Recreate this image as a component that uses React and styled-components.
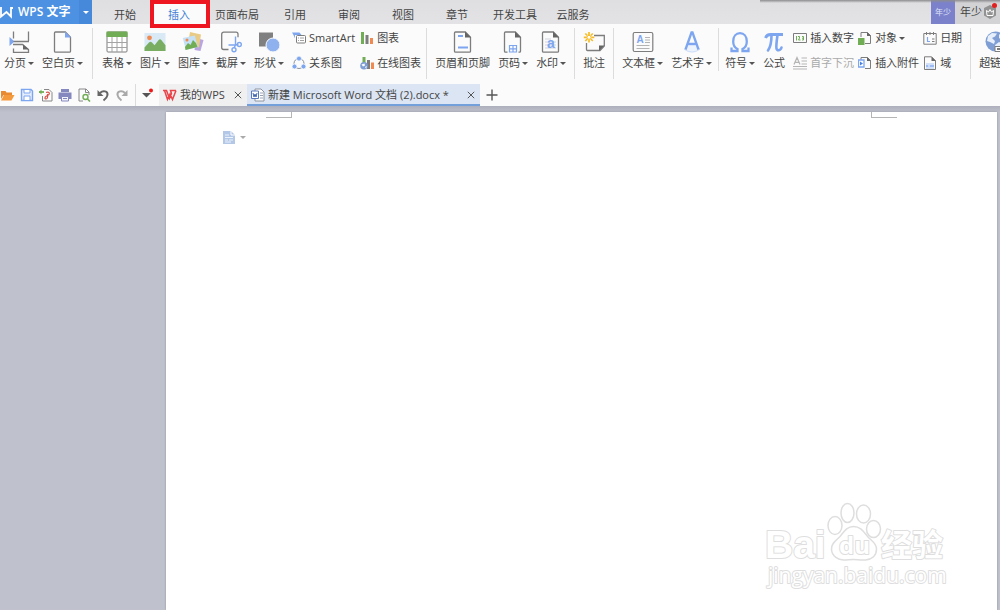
import React from "react";
import styled, { createGlobalStyle } from "styled-components";

const gray = "#7d7d7d";
const blue = "#7ea6f0";
const green = "#70ad55";
const orange = "#f08a50";

const Icon = ({ size = 22, children }) => (
  <svg width={size} height={size} viewBox={`0 0 ${size} ${size}`} fill="none" aria-hidden="true">
    {children}
  </svg>
);

const PageOutline = () => (
  <>
    <path d="M3.5 1h9.8l5.2 5.200v14a1 1 0 0 1-1 1h-14a1 1 0 0 1-1-1V2a1 1 0 0 1 1-1z" stroke={gray} strokeWidth="1.3" />
    <path d="M13 .6l6 6h-6z" fill="#666" />
  </>
);

const BreakIcon = () => (
  <Icon>
    <path d="M1.5 6l5 4.500-5 4.500z" fill={blue} />
    <path d="M5.500.5v7M5.500 10.500H21M20.500 10V.5M5 13.500h9.500l6 5v3h-15v-4" stroke={gray} strokeWidth="1.3" />
    <path d="M15 13.500v5h6z" fill="#666" />
  </Icon>
);

const BlankIcon = () => (
  <Icon>
    <path d="M3.5 1h9.800l5.200 5.200v14a1 1 0 0 1-1 1h-14a1 1 0 0 1-1-1V2a1 1 0 0 1 1-1z" stroke={gray} strokeWidth="1.3" />
    <path d="M13 .5l6 6h-6z" fill={blue} />
  </Icon>
);

const TableIcon = () => (
  <Icon>
    <rect x="1" y="1" width="20" height="20" rx="1" fill="#fff" stroke={gray} />
    <path d="M1 11.5h20M1 16.5h20M6 6v15M11 6v15M16 6v15" stroke="#a3a3a3" />
    <path d="M.5.5h21V6H.5z" fill={green} />
  </Icon>
);

const PictureIcon = () => (
  <Icon>
    <path d="M.5 2h21v18H.5z" fill="#d9e9f6" />
    <circle cx="5.5" cy="6.8" r="2.4" fill={orange} />
    <path d="M.5 20v-3.5L5 11.5c1-1 2-1 3 0l2.5 2.7 4-5c1-1.2 2-1.2 3 0l4 5V20z" fill="#79ae62" />
  </Icon>
);

const GalleryIcon = () => (
  <Icon>
    <path d="M14 7l7.5 2-3 11-6-1z" fill="#b9a6e0" />
    <path d="M8 1l11 2.5-2 13L6 13z" fill="#eacb85" />
    <path d="M.8 7l12-2.5 3 11.5-12 3z" fill="#c4e1f7" />
    <circle cx="5" cy="9" r="1.5" fill={orange} />
    <path d="M3 16l3-4 2.5 2 2.5-5 3 3 1.5 4-12 3z" fill={green} />
  </Icon>
);

const ScreenshotIcon = () => (
  <Icon>
    <path d="M8.5 18.5H3.700a2 2 0 0 1-2-2V3.200a2 2 0 0 1 2-2H16a2 2 0 0 1 2 2v3" stroke={gray} strokeWidth="1.3" />
    <path d="M15.5 5.500v8.500l-1.500 3M8.500 14h7l3-.5" stroke={blue} strokeWidth="1.4" />
    <circle cx="19.3" cy="13.500" r="2" stroke={blue} strokeWidth="1.4" />
    <circle cx="14" cy="18.800" r="2" stroke={blue} strokeWidth="1.4" />
  </Icon>
);

const ShapesIcon = () => (
  <Icon>
    <path d="M1 1.5h14v14H1z" fill="#808080" />
    <circle cx="15" cy="14" r="7" fill="#8fb2ef" stroke="#fbfbfb" />
  </Icon>
);

const HeaderFooterIcon = () => (
  <Icon>
    <PageOutline />
    <path d="M6 5h5M6 16.5h10" stroke={blue} strokeWidth="1.8" />
  </Icon>
);

const PageNumberIcon = () => (
  <Icon>
    <path d="M5.5 21.200h-2a1 1 0 0 1-1-1V2a1 1 0 0 1 1-1h9.800l5.200 5.200v14a1 1 0 0 1-1 1h-1" stroke={gray} strokeWidth="1.3" />
    <path d="M13 .6l6 6h-6z" fill="#666" />
    <path d="M7.5 14.5h7V21h-7zM7.5 17.800h7M11 14.500V21" stroke={blue} strokeWidth="1.2" />
  </Icon>
);

const IconLetter = styled.text`
  font-family: "Liberation Sans", sans-serif;
  font-weight: 700;
  font-size: ${(p) => p.$size}px;
  fill: ${blue};
  text-anchor: middle;
`;

const WatermarkIcon = () => (
  <Icon>
    <PageOutline />
    <path d="M5 8h6M5 11h11M5 14h11M5 17h11" stroke="#cdd3dd" />
    <IconLetter x="11" y="17" $size={14}>a</IconLetter>
  </Icon>
);

const CommentIcon = () => (
  <Icon>
    <path d="M11 4.500h10.300V15L17 19.500H4.500a1 1 0 0 1-1-1V12" stroke={gray} strokeWidth="1.3" />
    <path d="M21.5 14.5H16V20z" fill="#666" />
    <path d="M6 1v3M6 8.500v3M.8 6.300h3M8.300 6.300h3M2.300 2.500l2 2M7.800 8l2 2M9.800 2.500l-2 2M4.300 8l-2 2" stroke="#f7bd28" strokeWidth="1.7" />
    <circle cx="6" cy="6.300" r="2" fill="#fff" stroke="#f7bd28" />
  </Icon>
);

const TextBoxIcon = () => (
  <Icon>
    <rect x="1.2" y="1.500" width="19.600" height="19" rx="1.500" stroke={gray} strokeWidth="1.2" />
    <IconLetter x="8" y="12" $size={10}>A</IconLetter>
    <path d="M13 6.500h5M13 9h5M13 11.500h5M4.500 14.500h13M4.500 17.500h13" stroke="#b4b4b4" />
  </Icon>
);

const WordArtIcon = () => (
  <Icon>
    <ellipse cx="11" cy="18" rx="8" ry="3.500" fill="#edf3fd" />
    <path d="M3 18q8 6 16 0" stroke="#cfdef9" />
    <path d="M4.500 18.500L10.500 1.500h1l6 17M7 13h8" stroke={blue} strokeWidth="2.300" />
  </Icon>
);

const OmegaIcon = () => (
  <Icon>
    <path d="M2.500 16.500v3.500h6v-2C5.500 16.500 4.200 13.500 4.200 10.500c0-5 2.800-8.300 6.800-8.300s6.800 3.300 6.800 8.300c0 3-1.300 6-4.300 7.500v2h6v-3.500" stroke={blue} strokeWidth="2.300" />
  </Icon>
);

const PiIcon = () => (
  <Icon>
    <path d="M2.500 7C3.500 4 5 3.500 7.500 3.500H20" stroke={blue} strokeWidth="2.800" />
    <path d="M8.500 4c0 7-1 12-3.500 15.500M14.500 4c-1 7-1.500 11-1 13.500.5 2.500 4 2.500 5-1" stroke={blue} strokeWidth="2.600" strokeLinecap="round" />
  </Icon>
);

const GlobeIcon = () => (
  <Icon>
    <circle cx="10.5" cy="10.500" r="10" fill="#7f9fd4" />
    <path d="M3 5l4-3 5 .5-2 3-3 1.500 3 3-1 3-4-2-3-1zM14 3l5 4-2 2-3-2zM10 14l4-3 5 2-3 5-5 1z" fill="#e7effa" />
    <path d="M10 15.500h11.500v5H10z" fill="#fff" stroke={gray} />
    <path d="M12 18h3M17 18h3" stroke={gray} strokeWidth="2" />
  </Icon>
);

const SmartArtIcon = () => (
  <Icon size={14}>
    <path d="M0 1.500h7.500l2 2.500H3v3.500L1.500 4z" fill={blue} />
    <rect x="4.500" y="4.500" width="9" height="7.500" rx="1" fill="#fff" stroke={gray} />
    <path d="M6 7h1M8 7h4M6 9.500h1M8 9.500h4" stroke="#a0a0a0" />
  </Icon>
);

const RelationIcon = () => (
  <Icon size={14}>
    <circle cx="7" cy="7.500" r="5" stroke="#8a8f98" />
    <g fill={blue} stroke="#fbfbfb" strokeWidth=".8">
      <circle cx="7" cy="2.600" r="2.500" />
      <circle cx="2.500" cy="10.500" r="2.500" />
      <circle cx="11.500" cy="10.500" r="2.500" />
    </g>
  </Icon>
);

const ChartIcon = () => (
  <Icon size={14}>
    <path d="M1 1h3v12H1z" fill={green} />
    <path d="M5.500 4h3v9h-3z" fill={gray} />
    <path d="M10 7h3v6h-3z" fill={orange} />
  </Icon>
);

const OnlineChartIcon = () => (
  <Icon size={14}>
    <path d="M2.500 1h3v7h-3z" fill={green} />
    <path d="M7 4h3v9H7z" fill={gray} />
    <path d="M11 6.500h3V13h-3z" fill={orange} />
    <circle cx="4" cy="9.700" r="3.800" fill="#7f9fd4" />
    <path d="M1.500 8.500l3-1 .5 2-2 1zM5 11l2-1-1 2.500z" fill="#fff" />
  </Icon>
);

const NumberIcon = () => (
  <Icon size={14}>
    <path d="M.5 2.500h13v9H.5z" stroke={gray} />
    <path d="M3.500 5v4.500M5 5.500h1.500v1.500L5.500 9H7.500M9 5.500h1.500v3.500H9M9 7.200h1.500" stroke={green} />
  </Icon>
);

const DropCapIcon = () => (
  <Icon size={14}>
    <path d="M1 8.500l3-7 3 7M2 6.300h4M8.500 2H14M8.500 5H14M8.500 8H14M0 10.500h14M0 13h14" stroke="#b5b5b5" strokeWidth="1.200" />
  </Icon>
);

const SmallPage = () => (
  <>
    <path d="M3 6V1.500h6.500l3 3v8H7" stroke={gray} />
    <path d="M9 1v4h4z" fill="#666" />
  </>
);

const ObjectIcon = () => (
  <Icon size={14}>
    <SmallPage />
    <path d="M0 7h6.500v7H0z" fill={green} />
  </Icon>
);

const AttachIcon = () => (
  <Icon size={14}>
    <SmallPage />
    <path d="M.5 4H6v7H.5z" fill="#fff" stroke={blue} strokeWidth="1.300" />
    <path d="M2 5.500l3 2-3 2z" fill="#4c82dc" />
  </Icon>
);

const DateIcon = () => (
  <Icon size={14}>
    <path d="M.8 2.500h12.400v10.700H.8z" stroke={gray} />
    <path d="M3.500 1v3M7 1v3M10.500 1v3M9 8h2.500M9 10.500h2.500" stroke={gray} />
    <path d="M4.500 6v4.500H7" stroke={blue} strokeWidth="1.200" />
  </Icon>
);

const FieldIcon = () => (
  <Icon size={14}>
    <path d="M1.500.8h7l4 4v8.700h-11z" stroke={gray} />
    <path d="M8.500.5V5H13z" fill="#666" />
    <path d="M3 8h8M3 12h8" stroke="#a9c4f5" />
    <path d="M3 10h2.500M6.500 10H11" stroke={blue} strokeWidth="1.600" />
  </Icon>
);

const quickActions = [
  {
    label: "打开",
    art: (
      <>
        <path d="M0 3h4.500l1 1.500H11V7H2.500L0 11z" fill="#e88a32" />
        <path d="M3 7h10.500l-3 5.500H0z" fill="#f59a3c" />
      </>
    ),
  },
  {
    label: "保存",
    art: (
      <>
        <path d="M1.500 1.500H11L12.500 3v9.500h-11z" fill="#e4eefd" stroke={blue} strokeWidth="1.400" />
        <path d="M4 1.500h6V5H4zM4 8h6v4.500H4z" fill="#fff" stroke={blue} />
      </>
    ),
  },
  {
    label: "输出为PDF",
    art: (
      <>
        <path d="M5 1.500h5l3 3V13H3.500V8" stroke="#888" />
        <path d="M0 4h5" stroke={green} strokeWidth="1.800" />
        <path d="M2.500 1.500L0 4l2.500 2.500z" fill={green} />
        <path d="M7 4.500c3-1 4 .5 3 2L7.500 8c-2 1-2 3-.5 3s2-2 1.500-5" stroke="#d9534a" strokeWidth="1.200" />
      </>
    ),
  },
  {
    label: "打印",
    art: (
      <>
        <path d="M3 1h8v3H3zM.5 4.500h13V11H.5z" fill="#8587bf" />
        <path d="M3.500 8.500h7V13h-7z" fill="#f3f3fb" stroke="#8587bf" />
        <path d="M5 10.500h4" stroke="#8587bf" />
      </>
    ),
  },
  {
    label: "打印预览",
    art: (
      <>
        <path d="M6 13H2V1h7l3 3v3" stroke="#888" />
        <path d="M8.500 1v3.500H12" stroke="#888" />
        <circle cx="8.500" cy="9" r="2.500" stroke={green} strokeWidth="1.400" />
        <path d="M10.500 11l2.500 2.500" stroke={green} strokeWidth="1.600" />
      </>
    ),
  },
  {
    label: "撤销",
    art: (
      <>
        <path d="M4 5c3-3 8-2 7.500 2-.3 2.500-2 4-4 5.500" stroke="#666" strokeWidth="2" />
        <path d="M1.500 2v6h6z" fill="#666" />
      </>
    ),
  },
  {
    label: "恢复",
    art: (
      <>
        <path d="M10 5C7 2 2 3 2.500 7c.3 2.500 2 4 4 5.500" stroke="#a9a9a9" strokeWidth="2" />
        <path d="M12.500 2v6h-6z" fill="#a9a9a9" />
      </>
    ),
  },
];

const tabs = ["开始", "插入", "页面布局", "引用", "审阅", "视图", "章节", "开发工具", "云服务"];

const Tool = ({ icon, label, menu }) => (
  <ToolButton type="button">
    {icon}
    <ToolLabel>
      {label}
      {menu && <Caret />}
    </ToolLabel>
  </ToolButton>
);

const SmallTool = ({ icon, label, menu, disabled }) => (
  <SmallButton type="button" disabled={disabled}>
    {icon}
    <ToolLabel>
      {label}
      {menu && <Caret />}
    </ToolLabel>
  </SmallButton>
);

const Close = () => (
  <CloseButton type="button" aria-label="关闭">
    <svg width="8" height="8" viewBox="0 0 8 8" aria-hidden="true">
      <path d="M.8.8l6.400 6.400M7.200.8L.8 7.200" stroke="#555" />
    </svg>
  </CloseButton>
);

const Watermark = () => (
  <WatermarkSvg width="184" height="92" viewBox="0 0 184 92" role="img" aria-label="Baidu 经验">
    <WatermarkText x="0" y="58" $size={39} $weight={700}>Bai</WatermarkText>
    <g fill="#fff" stroke="#dedede" strokeWidth="1.500">
      <ellipse cx="70" cy="25.500" rx="7" ry="9" />
      <ellipse cx="82.500" cy="13" rx="6.500" ry="9.500" />
      <ellipse cx="98.500" cy="14" rx="7" ry="9" />
      <ellipse cx="108.500" cy="29" rx="7" ry="8.500" />
      <path d="M88.500 26.500c-7 0-10 6-13.500 10-4 4-9 7-8.500 13 .5 7 7 10.500 12 10.500 4 0 6-.5 10-.5s7 1 12 .5c6-.5 11-4 11-11 0-6-5-8-8.500-12-4-4.500-7-10.500-14.500-10.500z" />
    </g>
    <WatermarkText x="74" y="54" $size={24} $weight={700}>du</WatermarkText>
    <WatermarkText x="116" y="56" $size={31} $weight={700}>经验</WatermarkText>
    <WatermarkText x="3" y="83" $size={21} $weight={400}>jingyan.baidu.com</WatermarkText>
  </WatermarkSvg>
);

const App = () => (
  <Window>
    <GlobalStyle />
    <Header>
      <Brand type="button">
        <svg width="13" height="14" viewBox="0 0 13 14" fill="none" aria-hidden="true">
          <path d="M1 2v9.500l5.500-4.500 4.500 4.500V3h2" stroke="#fff" strokeWidth="1.800" />
        </svg>
        WPS 文字
      </Brand>
      <BrandMenu type="button" aria-label="菜单">
        <Caret $color="#fff" />
      </BrandMenu>
      <Tabs>
        {tabs.map((tab) => (
          <Tab type="button" key={tab} $active={tab === "插入"}>
            {tab}
          </Tab>
        ))}
      </Tabs>
      <Account>
        <Avatar>年少</Avatar>
        <UserName>
          年少
          <Badge>
            <svg width="14" height="16" viewBox="0 0 14 16" aria-hidden="true">
              <path d="M7 1l6 3v7.500L7 15l-6-3.500V4z" fill="#929292" />
              <path d="M3.500 6.500l2 1.500L7 5.500 8.500 8l2-1.500-.5 5H4z" fill="none" stroke="#fff" />
            </svg>
          </Badge>
        </UserName>
      </Account>
    </Header>

    <Ribbon>
      <Group $pad="0 9px 0 4px">
        <Tool icon={<BreakIcon />} label="分页" menu />
        <Tool icon={<BlankIcon />} label="空白页" menu />
      </Group>
      <Group $pad="0 5px 0 9px">
        <Tool icon={<TableIcon />} label="表格" menu />
        <Tool icon={<PictureIcon />} label="图片" menu />
        <Tool icon={<GalleryIcon />} label="图库" menu />
        <Tool icon={<ScreenshotIcon />} label="截屏" menu />
        <Tool icon={<ShapesIcon />} label="形状" menu />
        <ToolGrid $columns={2} $gap={5}>
          <SmallTool icon={<SmartArtIcon />} label="SmartArt" />
          <SmallTool icon={<ChartIcon />} label="图表" />
          <SmallTool icon={<RelationIcon />} label="关系图" />
          <SmallTool icon={<OnlineChartIcon />} label="在线图表" />
        </ToolGrid>
      </Group>
      <Group>
        <Tool icon={<HeaderFooterIcon />} label="页眉和页脚" />
        <Tool icon={<PageNumberIcon />} label="页码" menu />
        <Tool icon={<WatermarkIcon />} label="水印" menu />
      </Group>
      <Group>
        <Tool icon={<CommentIcon />} label="批注" />
      </Group>
      <Group $pad="0 6px 0 8px" $short>
        <Tool icon={<TextBoxIcon />} label="文本框" menu />
        <Tool icon={<WordArtIcon />} label="艺术字" menu />
      </Group>
      <Group $pad="0 8px 0 6px">
        <Tool icon={<OmegaIcon />} label="符号" menu />
        <Tool icon={<PiIcon />} label="公式" />
        <ToolGrid $columns={3} $gap={4}>
          <SmallTool icon={<NumberIcon />} label="插入数字" />
          <SmallTool icon={<ObjectIcon />} label="对象" menu />
          <SmallTool icon={<DateIcon />} label="日期" />
          <SmallTool icon={<DropCapIcon />} label="首字下沉" disabled />
          <SmallTool icon={<AttachIcon />} label="插入附件" />
          <SmallTool icon={<FieldIcon />} label="域" />
        </ToolGrid>
      </Group>
      <Group>
        <Tool icon={<GlobeIcon />} label="超链接" />
      </Group>
    </Ribbon>

    <DocumentBar>
      <QuickBar>
        {quickActions.map(({ label, art }) => (
          <QuickButton type="button" key={label} aria-label={label}>
            <Icon size={14}>{art}</Icon>
          </QuickButton>
        ))}
      </QuickBar>
      <MoreButton type="button" aria-label="自定义快速访问工具栏">
        <svg width="13" height="14" viewBox="0 0 13 14" aria-hidden="true">
          <path d="M1 5h9L5.500 9.500z" fill="#555" />
          <circle cx="10" cy="2.500" r="2" fill="#f01818" />
        </svg>
      </MoreButton>
      <DocTab>
        <DocName type="button">
          <svg width="14" height="14" viewBox="0 0 14 14" fill="none" aria-hidden="true">
            <path d="M0 2.500h3.500l3 8 2-5-1-3H13M1.500 2.500l3 9L7 6l2.500 5.500 3.500-9" stroke="#e9444a" strokeWidth="1.500" />
          </svg>
          我的WPS
        </DocName>
        <Close />
      </DocTab>
      <DocTab $active>
        <DocName type="button">
          <svg width="14" height="14" viewBox="0 0 14 14" fill="none" aria-hidden="true">
            <path d="M4 1h6l3 3v9H4z" fill="#fff" stroke="#8d93a0" />
            <path d="M9 5h3M9 7.500h3M9 10h3" stroke="#9aa2b2" />
            <path d="M.5 3h7v7.500h-7z" fill="#fff" stroke="#5b79bd" />
            <path d="M2 5l1 4 1-3 1 3 1-4" stroke="#4667b0" />
          </svg>
          新建 Microsoft Word 文档 (2).docx *
        </DocName>
        <Close />
      </DocTab>
      <NewTab type="button" aria-label="新建">
        <Icon size={12}>
          <path d="M6 .5v11M.5 6h11" stroke="#555" strokeWidth="1.400" />
        </Icon>
      </NewTab>
    </DocumentBar>

    <Workspace>
      <Page>
        <MarginMarks>
          <Corner />
          <Corner $right />
        </MarginMarks>
        <PasteMenu type="button" aria-label="段落布局">
          <svg width="12" height="13" viewBox="0 0 12 13" fill="none" aria-hidden="true">
            <path d="M0 0h8l4 4v9H0z" fill="#b3c7e6" />
            <path d="M8 0v4h4" stroke="#fff" />
            <path d="M2 4h4M2 6.500h8M2 9h3M6 9h4M2 11h6" stroke="#edf3fb" />
          </svg>
          <Caret $color="#aaa" />
        </PasteMenu>
        <Watermark />
      </Page>
    </Workspace>
  </Window>
);

const GlobalStyle = createGlobalStyle`
  *,
  *::before,
  *::after {
    box-sizing: border-box;
  }

  body {
    margin: 0;
    color: #444;
    font: 11px/14px "Open Sans", "Noto Sans CJK SC", sans-serif;
  }

  button {
    display: flex;
    align-items: center;
    padding: 0;
    border: 0;
    background: none;
    color: inherit;
    font: inherit;
    white-space: nowrap;
  }

  svg {
    display: block;
    flex: none;
  }
`;

const Window = styled.div`
  display: flex;
  flex-direction: column;
  min-height: 100vh;
  overflow: hidden;
  background: #bfc2cc;
`;

const Header = styled.header`
  display: flex;
  height: 24px;
  background: linear-gradient(#dfdfe1, #e3e3e5);
`;

const Brand = styled.button`
  gap: 5px;
  width: 79px;
  background: #4c91e2;
  color: #fff;
  font-size: 12px;
  font-weight: 600;
`;

const BrandMenu = styled.button`
  justify-content: center;
  width: 13px;
  background: #4689da;
`;

const Caret = styled.span`
  flex: none;
  border: solid transparent;
  border-width: 3px 3px 0;
  border-top-color: ${(p) => p.$color || "#555"};
`;

const Tabs = styled.nav`
  display: flex;
  padding-left: 6px;
`;

const Tab = styled.button`
  position: relative;
  justify-content: center;
  min-width: 54px;
  padding: 5px 9px 0;
  background: ${(p) => (p.$active ? "#fbfbfb" : "none")};
  color: ${(p) => (p.$active ? "#3f7fd6" : "#444")};

  ${(p) =>
    p.$active &&
    `
    &::after {
      content: "";
      position: absolute;
      z-index: 1;
      top: 0;
      left: -2px;
      right: -4px;
      height: 28px;
      border: 4px solid #ee1620;
    }
  `}
`;

const Account = styled.div`
  position: relative;
  display: flex;
  margin-left: auto;

  &::before {
    content: "";
    position: absolute;
    top: 0;
    right: 0;
    width: 240px;
    height: 3px;
    background: linear-gradient(#8d8d8f, transparent);
  }
`;

const Avatar = styled.div`
  display: flex;
  align-items: center;
  justify-content: center;
  width: 24px;
  background: #7b82cb;
  color: #dfe1f7;
  font-size: 8px;
`;

const UserName = styled.div`
  display: flex;
  align-items: center;
  gap: 1px;
  width: 45px;
  padding-left: 5px;
  background: #d3d3d5;
`;

const Badge = styled.span`
  position: relative;

  &::after {
    content: "";
    position: absolute;
    top: -1px;
    right: 0;
    width: 5px;
    height: 5px;
    border-radius: 50%;
    background: #e32020;
  }
`;

const Ribbon = styled.div`
  display: flex;
  align-items: flex-start;
  height: 60px;
  padding-top: 4px;
  overflow: hidden;
  background: #fbfbfb;
`;

const Group = styled.div`
  display: flex;
  flex: none;
  gap: 8px;
  height: ${(p) => (p.$short ? 43 : 51)}px;
  padding: ${(p) => p.$pad || "0 8px"};
  border-right: 1px solid #dcdcdc;
`;

const ToolButton = styled.button`
  flex-direction: column;
  align-self: flex-start;
  gap: 3px;
  padding-top: 3px;
`;

const ToolLabel = styled.span`
  display: flex;
  align-items: center;
  gap: 2px;
  height: 14px;
`;

const ToolGrid = styled.div`
  display: grid;
  grid-template-columns: repeat(${(p) => p.$columns}, auto);
  gap: 11px ${(p) => p.$gap}px;
  align-self: flex-start;
  padding-top: 3px;
`;

const SmallButton = styled.button`
  gap: 3px;

  &:disabled {
    color: #aaa;
  }
`;

const DocumentBar = styled.div`
  display: flex;
  height: 22px;
  background: #fbfbfb;
`;

const QuickBar = styled.div`
  display: flex;
  gap: 5px;
  padding: 0 6px 0 1px;
  border-right: 1px solid #dcdcdc;
`;

const QuickButton = styled.button`
  width: 14px;
`;

const MoreButton = styled.button`
  justify-content: center;
  width: 23px;
`;

const DocTab = styled.div`
  display: flex;
  align-items: center;
  justify-content: space-between;
  min-width: ${(p) => (p.$active ? 233 : 88)}px;
  padding: 0 5px 0 4px;
  background: ${(p) => (p.$active ? "#dbe5f3" : "#f0f0f0")};
  box-shadow: ${(p) => (p.$active ? "inset 0 -2px #739fdb" : "none")};
`;

const DocName = styled.button`
  gap: 3px;
`;

const CloseButton = styled.button`
  width: 8px;
`;

const NewTab = styled.button`
  padding: 0 6px;
`;

const Workspace = styled.main`
  display: flex;
  flex: 1;
  padding: 6px 3px 0 166px;
  background: linear-gradient(#adb0bc, #bfc2cc 6px);
`;

const Page = styled.div`
  position: relative;
  flex: 1;
  background: #fff;
  box-shadow: 0 0 2px #8f929c;
`;

const MarginMarks = styled.div`
  display: flex;
  justify-content: space-between;
  padding: 0 100px;
`;

const Corner = styled.span`
  width: 26px;
  height: 6px;
  border: solid #b5b5b5;
  border-width: ${(p) => (p.$right ? "0 0 1px 1px" : "0 1px 1px 0")};
`;

const PasteMenu = styled.button`
  gap: 5px;
  margin: 13px 0 0 57px;
`;

const WatermarkSvg = styled.svg`
  position: absolute;
  right: 48px;
  bottom: 18px;
`;

const WatermarkText = styled.text`
  font-family: ${(p) => (p.$size > 35 ? '"Liberation Sans"' : '"Open Sans"')}, "Noto Sans CJK SC", sans-serif;
  font-size: ${(p) => p.$size}px;
  font-weight: ${(p) => p.$weight};
  fill: #fff;
  stroke: #dedede;
  stroke-width: 2px;
  stroke-linejoin: round;
  paint-order: stroke;
`;

export default App;
